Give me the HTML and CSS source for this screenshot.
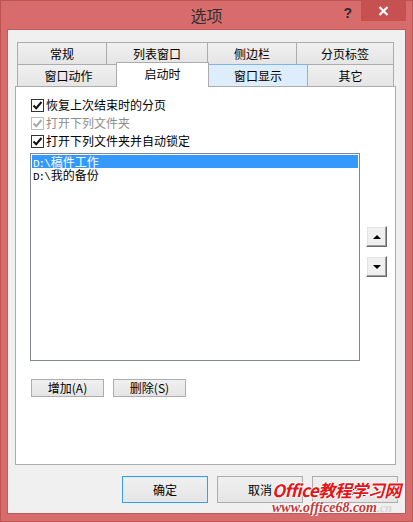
FILE: index.html
```html
<!DOCTYPE html>
<html>
<head>
<meta charset="utf-8">
<link rel="stylesheet" href="styles.css">
</head>
<body>
<div class="window">
  <div class="titlebar">
    <div class="spacer"></div>
    <div class="title">选项</div>
    <div class="controls">
      <div class="help">?</div>
      <div class="close">
        <svg width="11" height="10" viewBox="0 0 11 10"><path d="M1.5 1 L9.5 9 M9.5 1 L1.5 9" stroke="#fff" stroke-width="2.2" fill="none"/></svg>
      </div>
    </div>
  </div>
  <div class="client">
    <div class="tabs">
      <div class="tabrow">
        <div class="tab t1">常规</div>
        <div class="tab t2">列表窗口</div>
        <div class="tab t3">侧边栏</div>
        <div class="tab t4">分页标签</div>
      </div>
      <div class="tabrow row2">
        <div class="tab t5">窗口动作</div>
        <div class="tab t6 selected">启动时</div>
        <div class="tab t7 hover">窗口显示</div>
        <div class="tab t8">其它</div>
      </div>
    </div>
    <div class="panel">
      <div class="check"><span class="box"><svg width="11" height="11" viewBox="0 0 11 11"><path d="M1.5 5.5 L4.2 8.2 L9.5 2" stroke="#111" stroke-width="2" fill="none"/></svg></span>恢复上次结束时的分页</div>
      <div class="check disabled"><span class="box"><svg width="11" height="11" viewBox="0 0 11 11"><path d="M1.5 5.5 L4.2 8.2 L9.5 2" stroke="#a8a8a8" stroke-width="2" fill="none"/></svg></span>打开下列文件夹</div>
      <div class="check"><span class="box"><svg width="11" height="11" viewBox="0 0 11 11"><path d="M1.5 5.5 L4.2 8.2 L9.5 2" stroke="#111" stroke-width="2" fill="none"/></svg></span>打开下列文件夹并自动锁定</div>
      <div class="listarea">
        <div class="listbox">
          <div class="item sel"><span class="mono">D:\</span>稿件工作</div>
          <div class="item"><span class="mono">D:\</span>我的备份</div>
        </div>
        <div class="arrows">
          <div class="abtn"><span class="tri up"></span></div>
          <div class="abtn"><span class="tri down"></span></div>
        </div>
      </div>
      <div class="listbtns">
        <div class="btn small">增加(A)</div>
        <div class="btn small">删除(S)</div>
      </div>
    </div>
    <div class="footer">
      <div class="btn big primary">确定</div>
      <div class="btn big">取消</div>
      <div class="btn big">帮助</div>
    </div>
  </div>
  <div class="watermark">
    <div class="wm1">Office教程学习网</div>
    <div class="wm2">www.office68.com<span class="cn">.cn</span></div>
  </div>
</div>
</body>
</html>
```
FILE: styles.css
```css
html, body {
  margin: 0;
  padding: 0;
  background: #d86c6c;
}
body {
  font-family: "Noto Sans CJK SC", "Noto Sans", sans-serif;
  font-size: 12px;
  color: #000;
}
.window {
  width: 413px;
  height: 522px;
  box-sizing: border-box;
  background: #d86c6c;
  border: 1px solid #bd5454;
  position: relative;
  overflow: hidden;
}
.titlebar {
  height: 29px;
  display: grid;
  grid-template-columns: 1fr auto 1fr;
  align-items: start;
}
.title {
  font-size: 16px;
  line-height: 28px;
  color: #2e2e2e;
}
.controls {
  display: flex;
  justify-content: flex-end;
  align-items: flex-start;
}
.help {
  font-family: "Liberation Sans", sans-serif;
  font-weight: bold;
  font-size: 14px;
  line-height: 24px;
  color: #2a2a2a;
  margin-right: 9px;
}
.close {
  width: 45px;
  height: 21px;
  margin-top: -1px;
  margin-right: 6px;
  background: #c75050;
  display: flex;
  align-items: center;
  justify-content: center;
}
.client {
  margin-left: 7px;
  width: 397px;
  height: 483px;
  box-sizing: border-box;
  background: #f0f0f0;
  outline: 1px solid #c25a5a;
  padding: 12px 0 0 7px;
}
.tabs {
  margin-left: 2px;
}
.tabrow {
  display: flex;
  height: 23px;
}
.tabrow.row2 {
  height: 22px;
  margin-top: -1px;
}
.tab {
  box-sizing: border-box;
  border: 1px solid #acacac;
  background: linear-gradient(#f0f0f0, #e5e5e5);
  display: flex;
  align-items: center;
  justify-content: center;
  line-height: 14px;
}
.tab + .tab {
  margin-left: -1px;
}
.t1 { width: 90px; }
.t2 { width: 102px; }
.t3 { width: 90px; }
.t4 { width: 98px; }
.row2 .tab { border-bottom: none; }
.t5 { width: 103px; }
.tab.t6 {
  width: 93px;
  margin-left: -4px;
  margin-right: -1px;
  margin-top: -2px;
  height: 25px;
  align-self: flex-start;
  background: #fff;
  position: relative;
  z-index: 1;
  padding-bottom: 3px;
}
.t7 { width: 100px; }
.tab.t7 { margin-left: 0; }
.tab.hover {
  background: #deedfc;
  border-color: #7eb4ea;
}
.t8 { width: 87px; }
.panel {
  width: 381px;
  height: 379px;
  box-sizing: border-box;
  border: 1px solid #acacac;
  background: #fff;
  padding: 9px 0 0 14px;
}
.check {
  display: flex;
  align-items: center;
  height: 18px;
  margin-left: 1px;
  line-height: 14px;
}
.check .box {
  width: 13px;
  height: 13px;
  box-sizing: border-box;
  border: 1px solid #333;
  background: #fff;
  margin-right: 2px;
  display: flex;
  align-items: center;
  justify-content: center;
}
.check.disabled {
  color: #8d8d8d;
}
.check.disabled .box {
  border-color: #bcbcbc;
}
.listarea {
  display: flex;
  margin-top: 3px;
}
.listbox {
  width: 330px;
  height: 208px;
  box-sizing: border-box;
  border: 1px solid #828790;
  padding: 1px;
}
.item {
  height: 13px;
  line-height: 13px;
  padding-left: 1px;
  white-space: nowrap;
}
.item.sel {
  background: #3399ff;
  color: #fff;
}
.mono {
  font-family: "Liberation Mono", monospace;
  font-size: 11px;
  letter-spacing: -1px;
  margin-right: 1px;
}
.arrows {
  margin-left: 6px;
  margin-top: 73px;
  display: flex;
  flex-direction: column;
  gap: 9px;
}
.abtn {
  width: 21px;
  height: 21px;
  box-sizing: border-box;
  background: #f0f0f0;
  border-top: 1px solid #fff;
  border-left: 1px solid #fff;
  border-right: 1px solid #696969;
  border-bottom: 1px solid #696969;
  box-shadow: inset -1px -1px 0 #a0a0a0, inset 1px 1px 0 #e3e3e3;
  display: flex;
  align-items: center;
  justify-content: center;
}
.tri {
  width: 0;
  height: 0;
  border-left: 4px solid transparent;
  border-right: 4px solid transparent;
}
.tri.up { border-bottom: 4px solid #000; }
.tri.down { border-top: 4px solid #000; }
.listbtns {
  display: flex;
  gap: 9px;
  margin-top: 18px;
  margin-left: 1px;
}
.btn {
  box-sizing: border-box;
  border: 1px solid #acacac;
  background: linear-gradient(#f0f0f0, #e5e5e5);
  display: flex;
  align-items: center;
  justify-content: center;
  line-height: 14px;
}
.btn.small {
  width: 73px;
  height: 18px;
}
.footer {
  display: flex;
  gap: 9px;
  margin-top: 11px;
  padding-left: 107px;
}
.btn.big {
  width: 86px;
  height: 27px;
}
.btn.primary {
  border-color: #3c9be8;
  box-shadow: inset 0 0 0 1px #ddecfa;
}
.watermark {
  position: absolute;
  left: 271px;
  top: 479px;
  font-style: italic;
  font-weight: bold;
  white-space: nowrap;
}
.wm1 {
  font-size: 17px;
  line-height: 20px;
  color: #e3151a;
  letter-spacing: -0.5px;
  text-shadow: 1px 0 0 #fff, -1px 0 0 #fff, 0 1px 0 #fff, 0 -1px 0 #fff;
}
.wm2 {
  font-family: "Liberation Serif", serif;
  font-size: 14px;
  line-height: 15px;
  color: #c23a3a;
  text-shadow: 1px 1px 0 #fff, -1px -1px 0 #fff;
}
.wm2 .cn {
  color: rgba(160, 160, 160, 0.35);
  text-shadow: none;
  font-size: 12px;
}
```
